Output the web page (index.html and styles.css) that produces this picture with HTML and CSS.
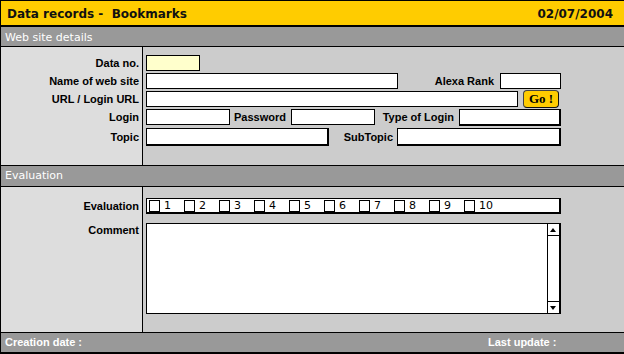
FILE: index.html
```html
<!DOCTYPE html>
<html lang="en">
<head>
    <meta charset="UTF-8">
    <title>Data records - Bookmarks</title>
    <link rel="stylesheet" href="styles.css">
</head>
<body>

<div class="record">
    <div class="titlebar">
        <span>Data records -&nbsp; Bookmarks</span>
        <span>02/07/2004</span>
    </div>

    <div class="section-head site-head">Web site details</div>
    <div class="section site">
        <label class="caption" for="data-no">Data no.</label>
        <div class="fields">
            <input type="text" id="data-no" class="field w-no">
        </div>

        <label class="caption" for="site-name">Name of web site</label>
        <div class="fields">
            <input type="text" id="site-name" class="field w-name">
            <label class="inline w-alexa-lbl" for="alexa">Alexa Rank</label>
            <input type="text" id="alexa" class="field w-alexa">
        </div>

        <label class="caption" for="url">URL / Login URL</label>
        <div class="fields">
            <input type="text" id="url" class="field w-url">
            <button class="go">Go !</button>
        </div>

        <label class="caption" for="login">Login</label>
        <div class="fields">
            <input type="text" id="login" class="field w-login">
            <label class="inline w-pass-lbl" for="password">Password</label>
            <input type="text" id="password" class="field w-pass">
            <label class="inline w-type-lbl" for="login-type">Type of Login</label>
            <input type="text" id="login-type" class="field thick w-type">
        </div>

        <label class="caption tall" for="topic">Topic</label>
        <div class="fields">
            <input type="text" id="topic" class="field thick tall w-topic">
            <label class="inline tall w-sub-lbl" for="subtopic">SubTopic</label>
            <input type="text" id="subtopic" class="field thick tall w-sub">
        </div>
    </div>

    <div class="section-head eval-head">Evaluation</div>
    <div class="section eval">
        <div class="caption">Evaluation</div>
        <div class="fields">
            <div class="rating">
                <label class="rate"><input type="checkbox">1</label>
                <label class="rate"><input type="checkbox">2</label>
                <label class="rate"><input type="checkbox">3</label>
                <label class="rate"><input type="checkbox">4</label>
                <label class="rate"><input type="checkbox">5</label>
                <label class="rate"><input type="checkbox">6</label>
                <label class="rate"><input type="checkbox">7</label>
                <label class="rate"><input type="checkbox">8</label>
                <label class="rate"><input type="checkbox">9</label>
                <label class="rate"><input type="checkbox">10</label>
            </div>
        </div>

        <label class="caption" for="comment">Comment</label>
        <div class="fields">
            <div class="comment">
                <textarea id="comment"></textarea>
                <div class="scroll">
                    <span class="arrow up"></span>
                    <span class="arrow down"></span>
                </div>
            </div>
        </div>
    </div>

    <div class="footer">
        <span>Creation date :</span>
        <span>Last update :</span>
    </div>
</div>

</body>
</html>
```

FILE: styles.css
```css
* {
    box-sizing: border-box;
}

body {
    margin: 0;
    font-family: "Liberation Sans", Arial, sans-serif;
    font-size: 11px;
    color: #000;
}

.record {
    width: 624px;
    height: 354px;
    border-top: 1px solid #000;
    border-left: 1px solid #000;
    background-color: #cccccc;
}

.titlebar {
    display: flex;
    justify-content: space-between;
    align-items: center;
    height: 26px;
    padding: 2px 11px 0 6px;
    background-color: #ffcc00;
    border-bottom: 2px solid #000;
    font: bold 12px "DejaVu Sans", Verdana, sans-serif;
    color: #111;
}

.section-head {
    height: 20px;
    padding-left: 4px;
    line-height: 19px;
    background-color: #999999;
    border-bottom: 1px solid #000;
    color: #fff;
    font: 11px "DejaVu Sans", Verdana, sans-serif;
}

.site-head {
    padding-top: 3px;
    line-height: 16px;
}

.eval-head {
    height: 22px;
    line-height: 20px;
    border-top: 1px solid #000;
}

.section {
    display: grid;
    grid-template-columns: 142px 1fr;
    background: linear-gradient(to right, #dddddd 141px, #000 141px, #000 142px, #cccccc 142px);
}

.site {
    height: 118px;
    padding-top: 8px;
    grid-auto-rows: 18px;
}

.eval {
    height: 145px;
    padding-top: 11px;
    grid-template-rows: 16px 91px;
    row-gap: 8px;
}

.caption {
    padding-right: 4px;
    text-align: right;
    font-weight: bold;
    line-height: 16px;
}

.caption.tall {
    margin-top: 1px;
    line-height: 18px;
}

.fields {
    display: flex;
    align-items: flex-start;
    padding-left: 3px;
}

.field {
    height: 16px;
    padding: 0 2px;
    border: 1px solid #000;
    background-color: #fff;
    font: 11px "Liberation Sans", Arial, sans-serif;
    outline: none;
}

.field.thick {
    height: 17px;
    border-right-width: 2px;
    border-bottom-width: 2px;
}

.field.tall {
    height: 18px;
    margin-top: 1px;
}

.inline {
    padding-right: 5px;
    text-align: right;
    font-weight: bold;
    line-height: 16px;
}

.inline.tall {
    margin-top: 1px;
    padding-right: 4px;
    line-height: 18px;
}

.w-no { width: 54px; background-color: #ffffcc; }
.w-name { width: 252px; }
.w-alexa-lbl { width: 102px; padding-right: 6px; }
.w-alexa { width: 61px; }
.w-url { width: 372px; }
.w-login { width: 84px; }
.w-pass-lbl { width: 61px; }
.w-pass { width: 84px; }
.w-type-lbl { width: 84px; }
.w-type { width: 102px; }
.w-topic { width: 183px; }
.w-sub-lbl { width: 68px; }
.w-sub { width: 164px; }

.go {
    width: 36px;
    height: 18px;
    margin: -1px 0 0 5px;
    padding: 0;
    background-color: #ffcc00;
    border: 1px solid #444;
    border-right-color: #111;
    border-bottom-color: #111;
    border-radius: 4px;
    font: bold 13px "Liberation Serif", "Times New Roman", serif;
    color: #000;
    line-height: 14px;
}

.rating {
    display: flex;
    align-items: center;
    width: 415px;
    height: 16px;
    padding-left: 2px;
    background-color: #fff;
    border: 1px solid #000;
    border-right-width: 2px;
    border-bottom-width: 2px;
}

.rate {
    display: flex;
    align-items: center;
    width: 35px;
    font: 11px "DejaVu Sans", Verdana, sans-serif;
    line-height: 12px;
}

.rate input {
    appearance: none;
    width: 11px;
    height: 12px;
    margin: 0 4px 0 0;
    border: 1px solid #000;
    background-color: #fff;
}

.comment {
    display: flex;
    width: 415px;
    height: 91px;
    margin-top: 1px;
    background-color: #fff;
    border: 1px solid #000;
    border-right-width: 2px;
}

.comment textarea {
    flex: 1;
    border: none;
    resize: none;
    outline: none;
    overflow: hidden;
}

.scroll {
    display: flex;
    flex-direction: column;
    justify-content: space-between;
    width: 12px;
    border-left: 1px solid #000;
}

.arrow {
    position: relative;
    height: 12px;
}

.arrow.up {
    border-bottom: 1px solid #000;
}

.arrow.down {
    border-top: 1px solid #000;
}

.arrow::after {
    content: "";
    position: absolute;
    left: 2px;
    top: 4px;
    border-left: 3px solid transparent;
    border-right: 3px solid transparent;
}

.arrow.up::after {
    border-bottom: 4px solid #000;
}

.arrow.down::after {
    border-top: 4px solid #000;
}

.footer {
    display: grid;
    grid-template-columns: 483px 1fr;
    height: 22px;
    line-height: 19px;
    background-color: #999999;
    border-top: 1px solid #000;
    border-bottom: 2px solid #000;
    color: #fff;
    font-weight: bold;
}

.footer span {
    padding-left: 4px;
}
```
